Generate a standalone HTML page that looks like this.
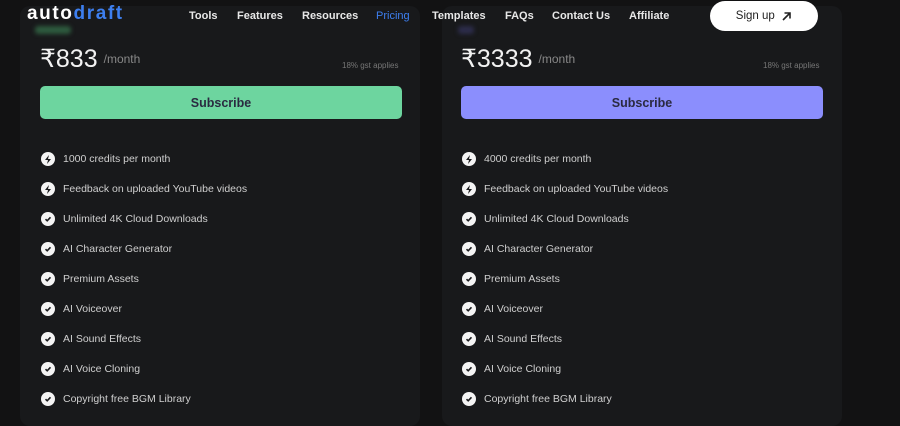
<!DOCTYPE html>
<html><head><style>
*{margin:0;padding:0;box-sizing:border-box}
body{width:900px;height:407px;background:#121213;font-family:"Liberation Sans",sans-serif;position:relative;overflow:hidden;color:#fff}
.card{position:absolute;top:6px;width:400px;height:420px;background:#18191b;border-radius:10px}
.price{position:absolute;top:44px;font-size:25px;color:#f2f2f2}
.price span{font-size:12px;color:#888;margin-left:6px;vertical-align:4px}
.gst{position:absolute;top:61px;font-size:8px;color:#777}
.btn{position:absolute;top:86px;height:33px;border-radius:5px;font-size:12.5px;color:#2a2a40;display:flex;align-items:center;justify-content:center;font-weight:bold}
.feat{position:absolute;font-size:10.5px;color:#cfcfcf;display:flex;align-items:center}
.ic{width:14px;height:14px;border-radius:50%;background:#f4f4f4;margin-right:8px;display:flex;align-items:center;justify-content:center}
nav a{position:absolute;top:10px;font-size:11px;font-weight:bold;color:#e8e8e8}
</style></head><body>
<div class="card" style="left:20px"></div>
<div class="card" style="left:442px"></div>
<div style="position:absolute;left:0;top:0;width:900px;height:6px;background:#121213"></div>
<div style="position:absolute;left:35px;top:26px;width:36px;height:8px;background:#2e5a3e;border-radius:3px;filter:blur(2px)"></div>
<div style="position:absolute;left:458px;top:26px;width:16px;height:8px;background:#2c2c4a;border-radius:3px;filter:blur(2px)"></div>
<div style="position:absolute;left:27px;top:3px;font-size:19px;font-weight:bold;letter-spacing:1.6px">auto<span style="color:#3d7ff0">draft</span></div>
<nav>
<a style="left:189px">Tools</a><a style="left:237px">Features</a><a style="left:302px">Resources</a><a style="left:376px;color:#3d7ff0;font-weight:normal">Pricing</a><a style="left:432px">Templates</a><a style="left:505px">FAQs</a><a style="left:552px">Contact Us</a><a style="left:629px">Affiliate</a>
</nav>
<div style="position:absolute;left:710px;top:1px;width:108px;height:30px;background:#fff;border-radius:15px;color:#222;font-size:11.5px;display:flex;align-items:center;justify-content:center">Sign up&nbsp;&nbsp;<svg width="11" height="11" viewBox="0 0 11 11"><path d="M2 9L9 2M3.5 2H9V7.5" stroke="#222" stroke-width="1.6" fill="none"/></svg></div>

<div class="price" style="left:40px">₹833<span>/month</span></div>
<div class="gst" style="left:342px">18% gst applies</div>
<div class="btn" style="left:40px;width:362px;background:#6dd59f">Subscribe</div>
<div class="price" style="left:461px">₹3333<span>/month</span></div>
<div class="gst" style="left:763px">18% gst applies</div>
<div class="btn" style="left:461px;width:362px;background:#8b8efd">Subscribe</div>

<div id="f"></div>
<script>
const L=[["1000 credits per month",1],["Feedback on uploaded YouTube videos",1],["Unlimited 4K Cloud Downloads"],["AI Character Generator"],["Premium Assets"],["AI Voiceover"],["AI Sound Effects"],["AI Voice Cloning"],["Copyright free BGM Library"]];
const R=L.map(x=>x.slice());R[0][0]="4000 credits per month";
let h="";
const bolt='<svg width="8" height="9" viewBox="0 0 8 9"><path d="M5 0L1 5h3L3 9l4-5H4z" fill="#18191b"/></svg>';
const chk='<svg width="8" height="8" viewBox="0 0 8 8"><path d="M1.5 4.2L3.2 5.8 6.5 2.3" stroke="#18191b" stroke-width="1.6" fill="none"/></svg>';
[[41,L],[462,R]].forEach(([x,a])=>a.forEach((it,i)=>{h+=`<div class="feat" style="left:${x}px;top:${152+i*30}px"><div class="ic">${it[1]?bolt:chk}</div>${it[0]}</div>`}));
document.getElementById("f").innerHTML=h;
</script>
</body></html>
